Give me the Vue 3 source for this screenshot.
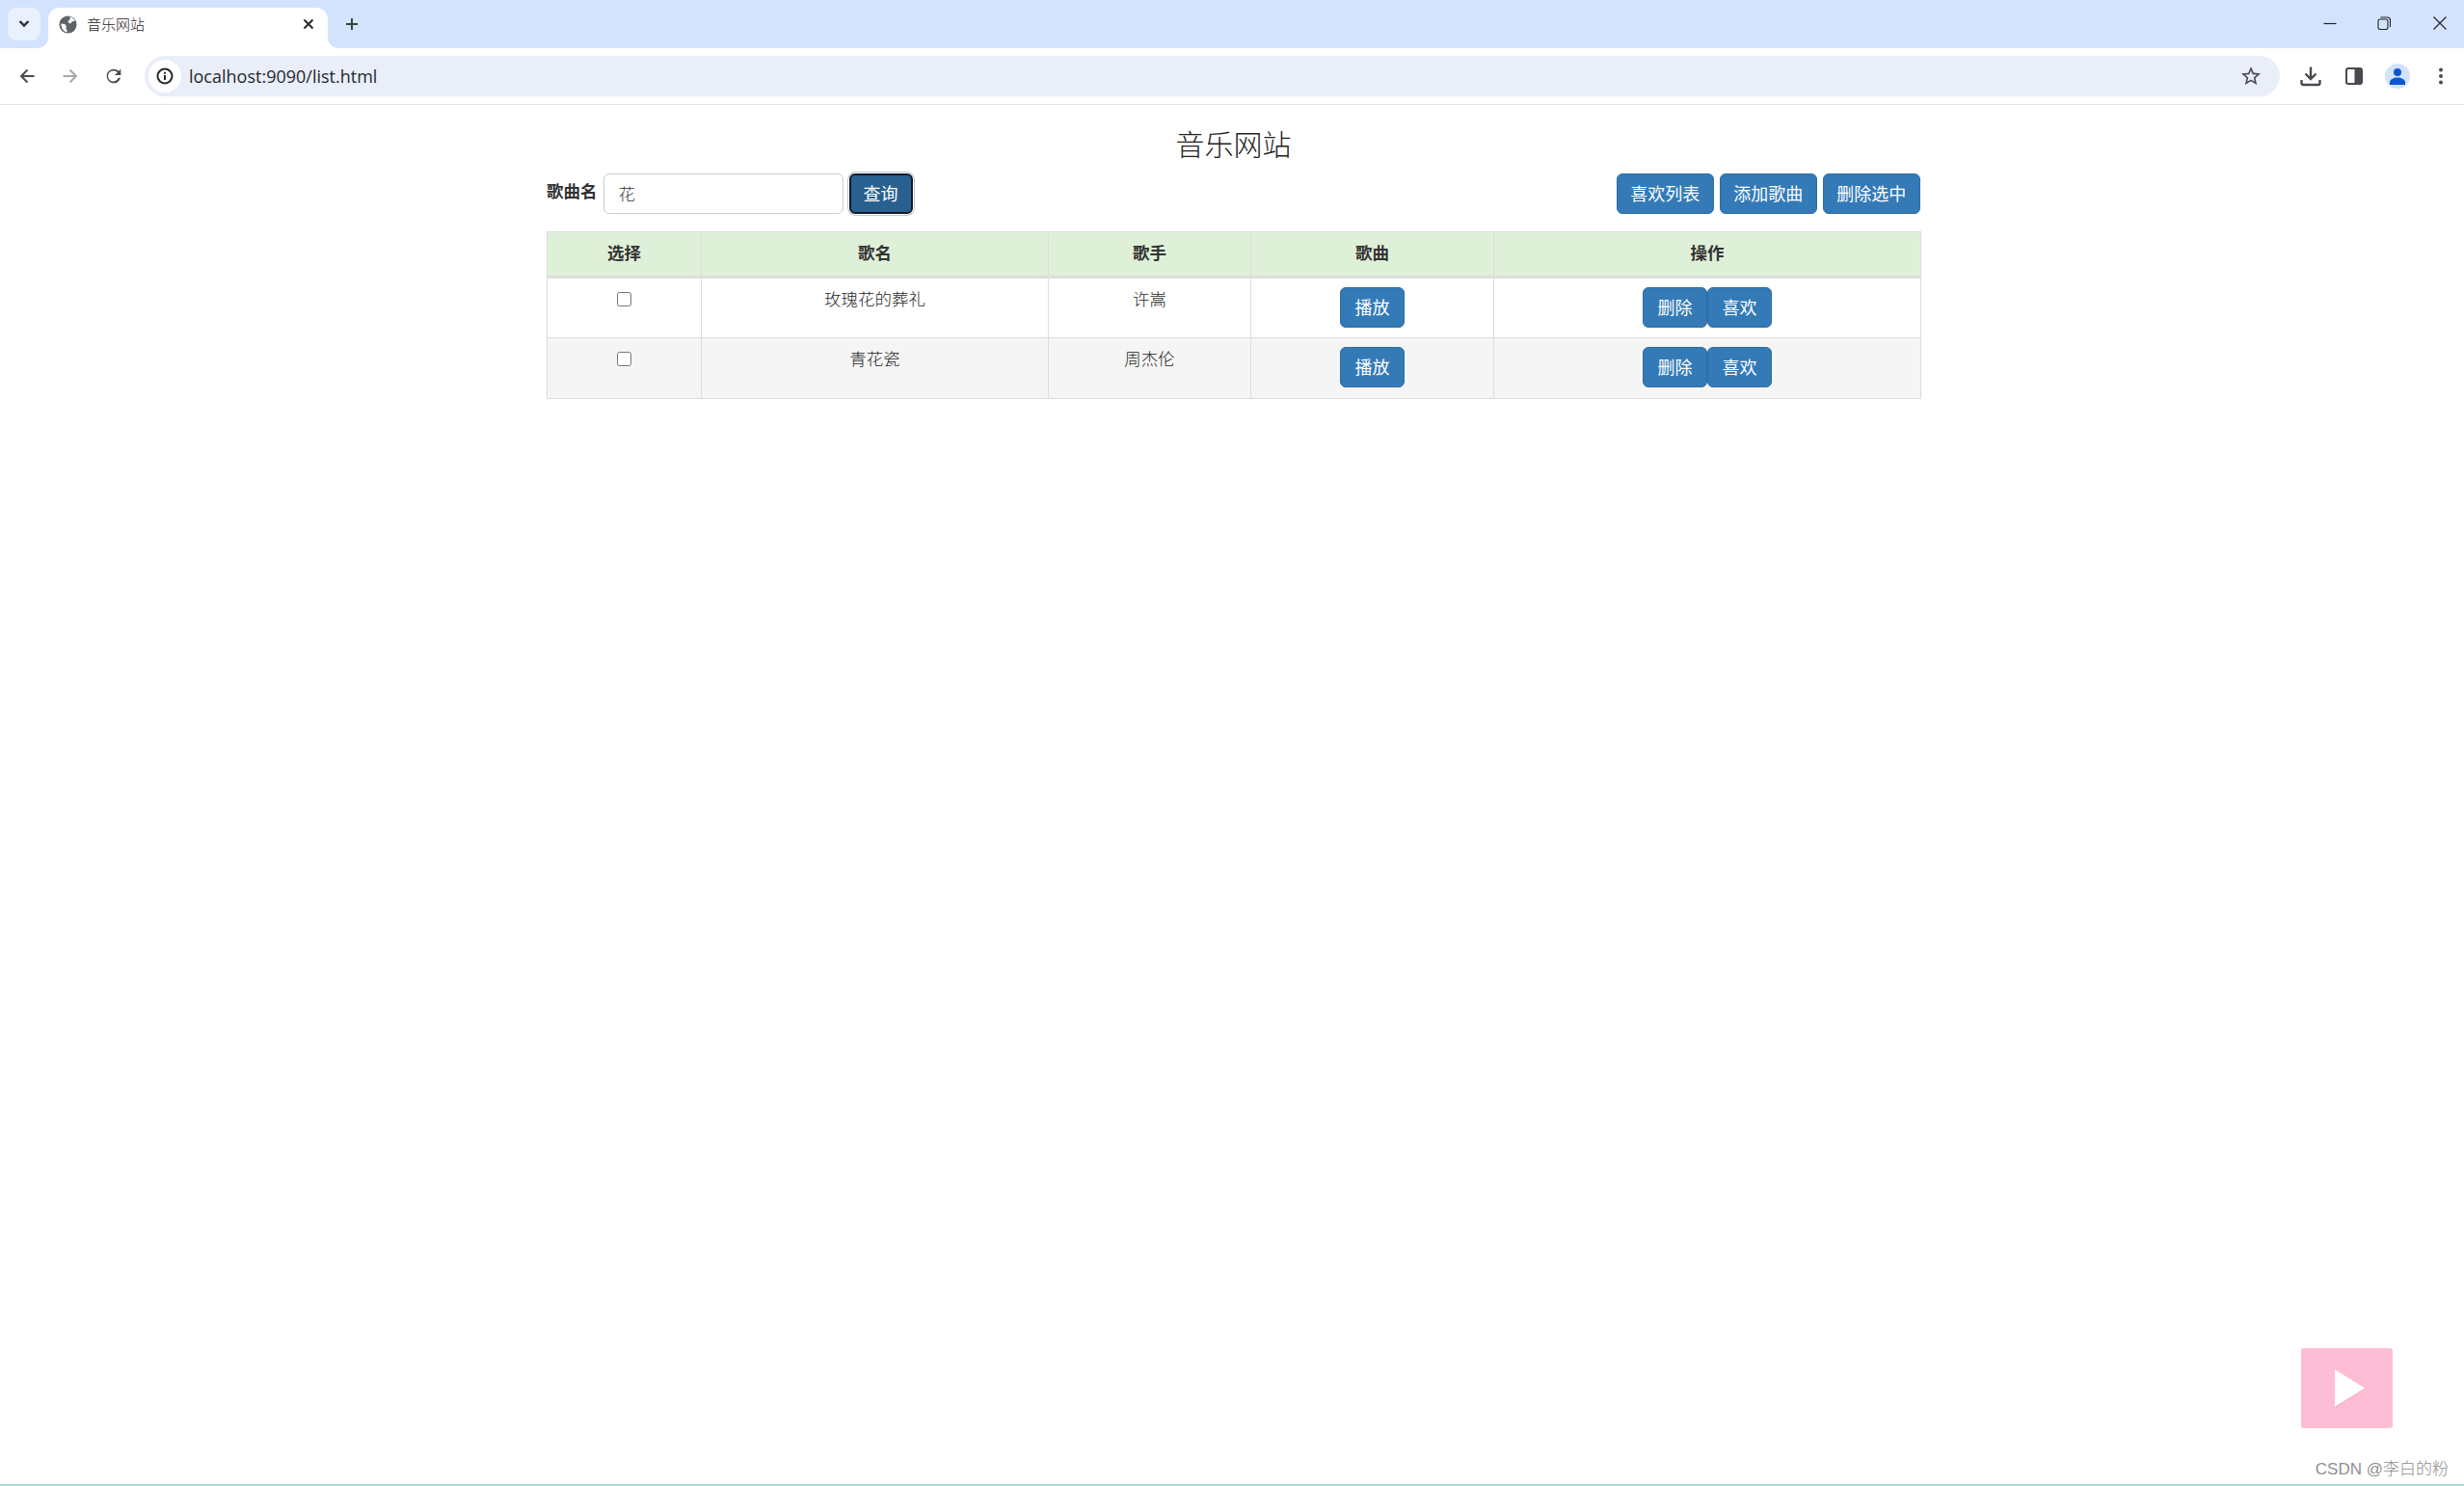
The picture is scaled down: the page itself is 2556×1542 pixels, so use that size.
<script setup>
const songs = [
  { name: '玫瑰花的葬礼', singer: '许嵩' },
  { name: '青花瓷', singer: '周杰伦' }
]
const headers = ['选择', '歌名', '歌手', '歌曲', '操作']
</script>

<template>
  <div class="window">
    <header class="tabstrip">
      <button class="tablist" aria-label="tabs">
        <svg width="14" height="10" viewBox="0 0 14 10"><path d="M2.5 2l4.5 4.5L11.500 2" fill="none" stroke="#2b2e33" stroke-width="2.400"/></svg>
      </button>
      <div class="tab">
        <svg class="favicon" width="19" height="19" viewBox="0 0 20 20">
          <circle cx="10" cy="10" r="9.500" fill="#5f6368"/>
          <path d="M12 1.500c2.500.5 4.500 2 5.800 4.500l-3.300.5-1.500 2.500-3-1.500 1-2.500 1.500-.5zM2.500 9l4 .5 2 2.500-1 2 1.500 2v2.500C5 17.500 2.500 14 2.500 9z" fill="#fff"/>
        </svg>
        <span class="tab-title">音乐网站</span>
        <svg class="tab-close" width="12" height="12" viewBox="0 0 12 12"><path d="M1.500 1.500l9 9M10.500 1.500l-9 9" stroke="#26292e" stroke-width="2"/></svg>
      </div>
      <svg class="newtab" width="14" height="14" viewBox="0 0 14 14"><path d="M7 1v12M1 7h12" stroke="#3c4043" stroke-width="2"/></svg>
      <div class="window-controls">
        <svg class="min" width="14" height="14" viewBox="0 0 14 14"><path d="M.5 7.500h13" stroke="#1f2328" stroke-width="1.200"/></svg>
        <svg width="14" height="14" viewBox="0 0 14 14" fill="none" stroke="#1f2328" stroke-width="1.100"><rect x="1" y="3" width="10" height="10.500" rx="2"/><path d="M3.500 1h7a3 3 0 0 1 3 3v7"/></svg>
        <svg width="14" height="14" viewBox="0 0 14 14"><path d="M.5.500l13 13M13.500.500l-13 13" stroke="#1f2328" stroke-width="1.200"/></svg>
      </div>
    </header>

    <nav class="toolbar">
      <div class="nav-buttons">
        <svg width="16" height="16" viewBox="0 0 16 16" fill="none" stroke="#474a4f" stroke-width="2"><path d="M15.500 8H2M8.500 1.500L2 8l6.500 6.500"/></svg>
        <svg width="16" height="16" viewBox="0 0 16 16" fill="none" stroke="#a6a8ab" stroke-width="2"><path d="M.5 8H14M7.500 1.500L14 8l-6.500 6.500"/></svg>
        <svg class="reload" width="22" height="22" viewBox="0 0 24 24"><path fill="#474a4f" d="M17.650 6.350A7.960 7.960 0 0 0 12 4a8 8 0 1 0 7.730 10h-2.600A6 6 0 1 1 12 6c1.660 0 3.140.69 4.220 1.780L13 11h7V4z"/></svg>
      </div>
      <div class="omnibox">
        <span class="site-info">
          <svg width="18" height="18" viewBox="0 0 18 18"><circle cx="9" cy="9" r="7.500" fill="none" stroke="#25282c" stroke-width="2"/><path d="M9 8v5M9 4.800v2" stroke="#25282c" stroke-width="2"/></svg>
        </span>
        <span class="url">localhost:9090/list.html</span>
        <svg class="star" width="24" height="24" viewBox="0 0 24 24"><path fill="#474a4f" d="M22 9.240l-7.190-.62L12 2 9.190 8.630 2 9.240l5.460 4.730L5.820 21 12 17.270 18.180 21l-1.630-7.030L22 9.240zM12 15.400l-3.760 2.270 1-4.280-3.320-2.880 4.380-.38L12 6.100l1.710 4.040 4.380.38-3.320 2.880 1 4.280L12 15.400z"/></svg>
      </div>
      <div class="toolbar-actions">
        <svg class="download" width="22" height="22" viewBox="0 0 22 22" fill="none"><path d="M11 1.500v12M5.500 8.500l5.500 5.500 5.500-5.500" stroke="#474a4f" stroke-width="2.400"/><path d="M1.500 15v3a2 2 0 0 0 2 2h15a2 2 0 0 0 2-2v-3" stroke="#474a4f" stroke-width="2.400"/></svg>
        <svg class="panel" width="18" height="18" viewBox="0 0 18 18"><rect x="1" y="1" width="16" height="16" rx="2" fill="#fff" stroke="#474a4f" stroke-width="2"/><rect x="9.500" y="1" width="7.500" height="16" fill="#474a4f"/></svg>
        <span class="avatar">
          <svg width="18" height="18" viewBox="0 0 18 18"><circle cx="9" cy="5" r="4" fill="#0b57d0"/><path d="M1 18v-2.500C1 12.500 5 10.500 9 10.500s8 2 8 5V18z" fill="#0b57d0"/></svg>
        </span>
        <svg class="menu" width="6" height="18" viewBox="0 0 6 18"><circle cx="3" cy="2.500" r="2" fill="#474a4f"/><circle cx="3" cy="9" r="2" fill="#474a4f"/><circle cx="3" cy="15.500" r="2" fill="#474a4f"/></svg>
      </div>
    </nav>

    <main class="page">
      <div class="container">
        <h1 class="title">音乐网站</h1>
        <div class="controls">
          <form class="search" @submit.prevent>
            <label class="search-label" for="song">歌曲名</label>
            <input id="song" class="search-input" type="text" value="花" />
            <button class="btn btn-focus" type="submit">查询</button>
          </form>
          <div class="actions">
            <button class="btn">喜欢列表</button>
            <button class="btn">添加歌曲</button>
            <button class="btn">删除选中</button>
          </div>
        </div>
        <table class="songs">
          <colgroup>
            <col class="c1" /><col class="c2" /><col class="c3" /><col class="c4" /><col class="c5" />
          </colgroup>
          <thead>
            <tr><th v-for="h in headers" :key="h">{{ h }}</th></tr>
          </thead>
          <tbody>
            <tr v-for="s in songs" :key="s.name">
              <td><input class="check" type="checkbox" /></td>
              <td>{{ s.name }}</td>
              <td>{{ s.singer }}</td>
              <td class="cell-btn"><button class="btn">播放</button></td>
              <td class="cell-btn"><button class="btn">删除</button><button class="btn">喜欢</button></td>
            </tr>
          </tbody>
        </table>
      </div>
    </main>

    <button class="player" aria-label="play">
      <svg width="32" height="40" viewBox="0 0 32 40"><path d="M1 2l30 18L1 40z" fill="#f4a6c3"/><path d="M0 0l31 19.500L0 39z" fill="#fff"/></svg>
    </button>
    <div class="watermark">CSDN @李白的粉</div>
    <div class="bottom-line"></div>
  </div>
</template>

<style>
html, body { margin: 0; background: #fff; }
</style>

<style scoped>
.window {
  position: relative;
  height: 1542px;
  overflow: hidden;
  background: #fff;
  color: #333;
  font-family: "Noto Sans CJK SC", "Liberation Sans", sans-serif;
}
.tabstrip {
  height: 50px;
  background: #d3e3fd;
  display: flex;
  align-items: flex-end;
  padding-left: 8px;
  box-sizing: border-box;
  position: relative;
}
.tablist {
  width: 34px;
  height: 34px;
  margin-bottom: 8px;
  padding: 0;
  border: 0;
  border-radius: 9px;
  background: #e9f1fe;
  display: flex;
  align-items: center;
  justify-content: center;
}
.tab {
  width: 290px;
  height: 42px;
  margin-left: 8px;
  background: #fff;
  border-radius: 12px 12px 0 0;
  display: flex;
  align-items: center;
  padding: 0 14px 8px 11px;
  box-sizing: border-box;
  position: relative;
}
.tab::before,
.tab::after {
  content: "";
  position: absolute;
  bottom: 0;
  width: 12px;
  height: 12px;
}
.tab::before {
  left: -12px;
  background: radial-gradient(circle at 0 0, #d3e3fd 12px, #fff 12.500px);
}
.tab::after {
  right: -12px;
  background: radial-gradient(circle at 100% 0, #d3e3fd 12px, #fff 12.500px);
}
.favicon { flex: none; }
.tab-title {
  margin-left: 10px;
  font-size: 15px;
  line-height: 20px;
  font-weight: 300;
  color: #1f2226;
  flex: 1;
}
.newtab { margin: 0 0 18px 18px; }
.window-controls {
  position: absolute;
  top: 17px;
  right: 18px;
  display: flex;
  gap: 44px;
}
.min { margin-right: -2px; }
.toolbar {
  height: 59px;
  box-sizing: border-box;
  border-bottom: 1px solid #e1e3e6;
  border-radius: 8px 8px 0 0;
  display: flex;
  align-items: center;
  background: #fff;
}
.nav-buttons {
  width: 150px;
  padding-left: 20px;
  box-sizing: border-box;
  display: flex;
  align-items: center;
  gap: 29px;
  flex: none;
}
.reload { margin-left: -3px; }
.omnibox {
  width: 2215px;
  height: 42px;
  border-radius: 21px;
  background: #e9eef8;
  display: flex;
  align-items: center;
  box-sizing: border-box;
  padding: 0 18px 0 4px;
  flex: none;
}
.site-info {
  width: 34px;
  height: 34px;
  border-radius: 50%;
  background: #fff;
  display: flex;
  align-items: center;
  justify-content: center;
  flex: none;
}
.url {
  margin-left: 8px;
  font-family: "Open Sans", "Liberation Sans", sans-serif;
  font-size: 18px;
  color: #25282c;
  flex: 1;
}
.toolbar-actions {
  display: flex;
  align-items: center;
  margin-left: 21px;
}
.panel { margin-left: 25px; }
.avatar {
  width: 26px;
  height: 26px;
  margin-left: 23px;
  border-radius: 50%;
  background: #d3e3fd;
  display: flex;
  align-items: center;
  justify-content: center;
}
.menu { margin-left: 29px; }

.page {
  display: flex;
  justify-content: center;
  padding-left: 3px;
}
.container { width: 1425px; }
.title {
  margin: 0;
  height: 71px;
  padding-top: 19px;
  box-sizing: border-box;
  text-align: center;
  font-size: 30px;
  line-height: 40px;
  font-weight: 300;
  color: #1f1f1f;
}
.controls {
  display: flex;
  justify-content: space-between;
  align-items: flex-start;
  height: 60px;
}
.search { display: flex; align-items: flex-start; margin: 0; }
.search-label {
  font-size: 17.500px;
  font-weight: 700;
  line-height: 36px;
  width: 53.500px;
  white-space: nowrap;
}
.search-input {
  width: 249px;
  height: 42px;
  box-sizing: border-box;
  margin-left: 5px;
  padding: 0 15px 2px;
  border: 1.500px solid #ccc;
  border-radius: 6px;
  font: 300 17.500px "Noto Sans CJK SC", sans-serif;
  color: #333;
  outline: none;
}
.btn {
  height: 42px;
  padding: 0 15px 3px;
  border: 1px solid #2e6da4;
  border-radius: 6px;
  background: #337ab7;
  color: #fff;
  font: 400 18px/36px "Noto Sans CJK SC", sans-serif;
  white-space: nowrap;
  vertical-align: top;
}
.btn-focus {
  width: 66px;
  padding: 0 0 3px;
  margin-left: 6px;
  background: #286090;
  border: 2px solid #101c2a;
  box-shadow: 0 0 0 1px #fff, 0 0 0 1.500px #7d8a99;
  border-radius: 6px;
}
.actions { display: flex; gap: 5.500px; }
.actions .btn { width: 101.500px; padding: 0 0 3px; }
.songs {
  width: 1425px;
  border-collapse: collapse;
  table-layout: fixed;
  font-size: 17.500px;
  font-weight: 300;
  color: #1f1f1f;
}
.c1 { width: 160px; }
.c2 { width: 360px; }
.c3 { width: 210px; }
.c4 { width: 252px; }
.c5 { width: 443px; }
.songs th,
.songs td {
  border: 1.500px solid #ddd;
  text-align: center;
  vertical-align: top;
  box-sizing: border-box;
}
.songs th {
  height: 47px;
  padding: 0;
  background: #dff0d8;
  border-bottom-width: 3px;
  font-size: 17.500px;
  font-weight: 700;
  line-height: 42px;
  color: #333;
}
.songs td {
  height: 63px;
  padding: 8px 0 0;
  line-height: 26px;
}
.songs tbody tr:nth-child(even) td { background: #f5f5f5; }
.songs .cell-btn { padding-top: 9px; }
.cell-btn .btn { width: 67px; padding: 0 0 3px; }
.check { width: 15px; height: 15px; margin: 6px 0 0; vertical-align: top; }

.player {
  position: absolute;
  left: 2387px;
  top: 1399px;
  width: 95px;
  height: 83px;
  padding: 0 0 0 6px;
  border: 0;
  border-radius: 3px;
  background: #fcbdd5;
  display: flex;
  align-items: center;
  justify-content: center;
}
.watermark {
  position: absolute;
  right: 16px;
  top: 1514px;
  font-family: "Liberation Sans", "Noto Sans CJK SC", sans-serif;
  font-size: 17px;
  line-height: 22px;
  font-weight: 300;
  color: #8f8f8f;
}
.bottom-line {
  position: absolute;
  left: 0;
  right: 0;
  bottom: 0;
  height: 2px;
  background: #a9d9d3;
}
</style>
